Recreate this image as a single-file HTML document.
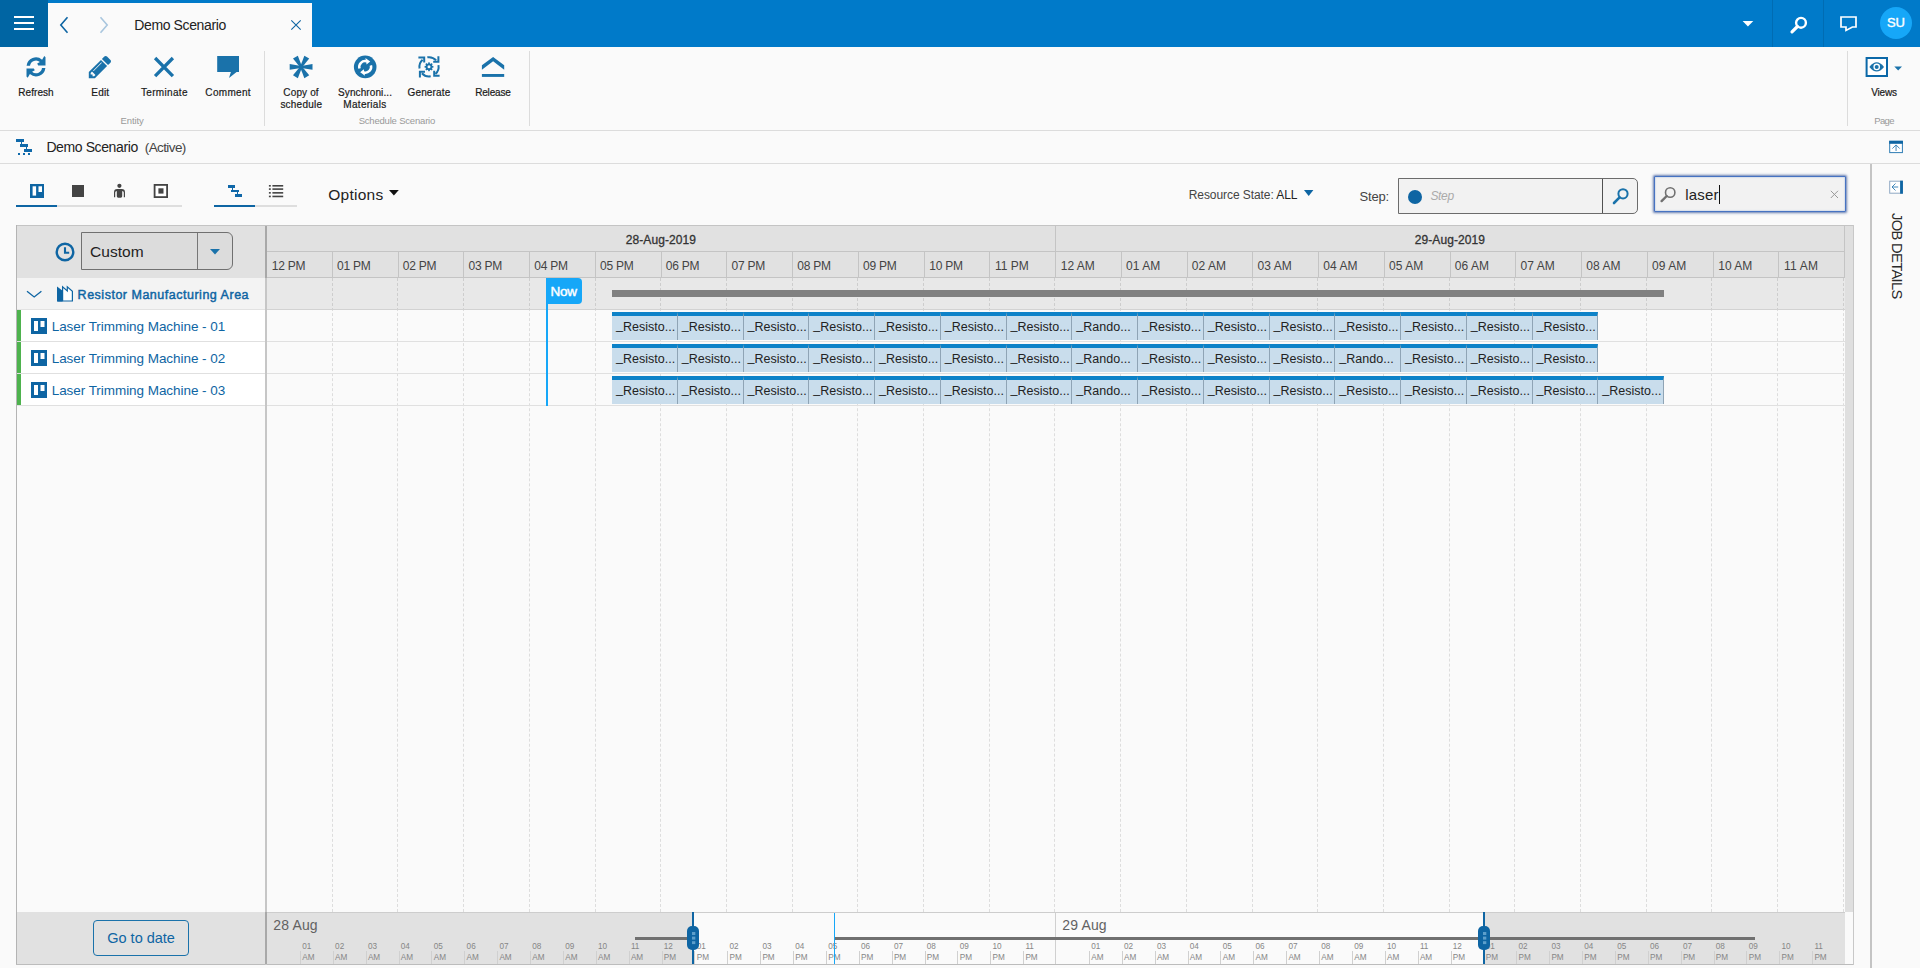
<!DOCTYPE html><html><head><meta charset="utf-8"><title>Demo Scenario</title><style>
*{box-sizing:border-box;margin:0;padding:0}
html,body{width:1920px;height:968px;overflow:hidden;background:#fafafa;font-family:"Liberation Sans",sans-serif;color:#222}
.a{position:absolute}
.t{position:absolute;white-space:nowrap;line-height:1}
svg{position:absolute;overflow:visible}
.task{position:absolute;height:28px;background:#c9ddec;border-top:4px solid #0d82c8;border-right:1px solid #8fa4b5}
.vd{position:absolute;width:0;border-left:1px dashed rgba(0,0,0,0.115);top:278px;height:634px}
.mt{position:absolute;width:1px;height:13px;top:951px;background:#d0d0d0}
</style></head><body>
<div class="a" style="left:0;top:0;width:1920px;height:47px;background:#007ac9"></div>
<div class="a" style="left:0;top:0;width:48px;height:47px;background:#0065a3"></div>
<div class="a" style="left:14px;top:16px;width:20px;height:2px;background:#fff"></div>
<div class="a" style="left:14px;top:22px;width:20px;height:2px;background:#fff"></div>
<div class="a" style="left:14px;top:28px;width:20px;height:2px;background:#fff"></div>
<div class="a" style="left:48px;top:3px;width:264px;height:44px;background:#fafafa"></div>
<svg style="left:58px;top:15px" width="12" height="20" viewBox="0 0 12 20"><path d="M9.5 2.2 L2.8 10 L9.5 17.8" fill="none" stroke="#0e65a3" stroke-width="1.6"/></svg>
<svg style="left:98px;top:15px" width="12" height="20" viewBox="0 0 12 20"><path d="M2.5 2.2 L9.2 10 L2.5 17.8" fill="none" stroke="#a9c6de" stroke-width="1.6"/></svg>
<div class="t" id="tabtitle" style="top:18.3px;font-size:14px;color:#222;letter-spacing:-0.384px;left:134.3px;">Demo Scenario</div>
<svg style="left:290px;top:19px" width="12" height="12" viewBox="0 0 12 12"><path d="M1.3 1.3 L10.7 10.7 M10.7 1.3 L1.3 10.7" fill="none" stroke="#0e65a3" stroke-width="1.1"/></svg>
<svg style="left:1742px;top:21px" width="12" height="7" viewBox="0 0 12 7"><path d="M0.6 0 H11.3 L5.95 5.6 Z" fill="#fff"/></svg>
<div class="a" style="left:1772px;top:0;width:1px;height:47px;background:#006cb3"></div>
<div class="a" style="left:1823px;top:0;width:1px;height:47px;background:#006cb3"></div>
<svg style="left:1790px;top:16px" width="18" height="18" viewBox="0 0 18 18"><circle cx="11" cy="6.8" r="4.9" fill="none" stroke="#fff" stroke-width="2.4"/><path d="M7.4 10.5 L2.0 15.9" stroke="#fff" stroke-width="3.2" stroke-linecap="round"/></svg>
<svg style="left:1840px;top:16px" width="17" height="16" viewBox="0 0 17 16"><path d="M1 1 H16 V11 H12.4 L6 14.4 V11 H1 Z" fill="none" stroke="#fff" stroke-width="1.7" stroke-linejoin="miter"/></svg>
<div class="a" style="left:1880px;top:7px;width:32px;height:32px;border-radius:16px;background:#16a7f8"></div>
<div class="t" id="su" style="top:16.2px;font-size:13px;color:#fff;letter-spacing:-0.042px;left:1795.98px;width:200px;text-align:center;-webkit-text-stroke:0.4px #fff;">SU</div>
<div class="a" style="left:0;top:130px;width:1920px;height:1px;background:#dcdcdc"></div>
<div class="t" id="r1" style="top:88px;font-size:10px;color:#1a1a1a;letter-spacing:0.059px;left:-63.97px;width:200px;text-align:center;-webkit-text-stroke:0.2px #1a1a1a;">Refresh</div>
<div class="t" id="r2" style="top:88px;font-size:10px;color:#1a1a1a;letter-spacing:0.190px;left:0.34px;width:200px;text-align:center;-webkit-text-stroke:0.2px #1a1a1a;">Edit</div>
<div class="t" id="r3" style="top:88px;font-size:10px;color:#1a1a1a;letter-spacing:0.329px;left:64.36px;width:200px;text-align:center;-webkit-text-stroke:0.2px #1a1a1a;">Terminate</div>
<div class="t" id="r4" style="top:88px;font-size:10px;color:#1a1a1a;letter-spacing:0.329px;left:128.16px;width:200px;text-align:center;-webkit-text-stroke:0.2px #1a1a1a;">Comment</div>
<div class="t" id="r5a" style="top:88px;font-size:10px;color:#1a1a1a;letter-spacing:0.143px;left:201.07px;width:200px;text-align:center;-webkit-text-stroke:0.2px #1a1a1a;">Copy of</div>
<div class="t" id="r5b" style="top:100px;font-size:10px;color:#1a1a1a;letter-spacing:0.223px;left:201.31px;width:200px;text-align:center;-webkit-text-stroke:0.2px #1a1a1a;">schedule</div>
<div class="t" id="r6a" style="top:88px;font-size:10px;color:#1a1a1a;letter-spacing:0.103px;left:265.05px;width:200px;text-align:center;-webkit-text-stroke:0.2px #1a1a1a;">Synchroni...</div>
<div class="t" id="r6b" style="top:100px;font-size:10px;color:#1a1a1a;letter-spacing:0.285px;left:264.94px;width:200px;text-align:center;-webkit-text-stroke:0.2px #1a1a1a;">Materials</div>
<div class="t" id="r7" style="top:88px;font-size:10px;color:#1a1a1a;letter-spacing:0.146px;left:328.97px;width:200px;text-align:center;-webkit-text-stroke:0.2px #1a1a1a;">Generate</div>
<div class="t" id="r8" style="top:88px;font-size:10px;color:#1a1a1a;letter-spacing:-0.185px;left:392.91px;width:200px;text-align:center;-webkit-text-stroke:0.2px #1a1a1a;">Release</div>
<div class="t" id="r9" style="top:88px;font-size:10px;color:#1a1a1a;letter-spacing:-0.156px;left:1784.02px;width:200px;text-align:center;-webkit-text-stroke:0.2px #1a1a1a;">Views</div>
<div class="a" style="left:264px;top:51px;width:1px;height:75px;background:#dcdcdc"></div>
<div class="a" style="left:529px;top:51px;width:1px;height:75px;background:#dcdcdc"></div>
<div class="a" style="left:1847px;top:51px;width:1px;height:75px;background:#dcdcdc"></div>
<div class="t" id="g1" style="top:115.5px;font-size:9.5px;color:#999;letter-spacing:-0.103px;left:32.05px;width:200px;text-align:center;">Entity</div>
<div class="t" id="g2" style="top:115.5px;font-size:9.5px;color:#999;letter-spacing:-0.191px;left:296.90px;width:200px;text-align:center;">Schedule Scenario</div>
<div class="t" id="g3" style="top:115.5px;font-size:9.5px;color:#999;letter-spacing:-0.654px;left:1784.07px;width:200px;text-align:center;">Page</div>
<svg style="left:20px;top:50px" width="32" height="34" viewBox="0 0 32 34"><g fill="#1a72aa"><path d="M6.6 15.7 A9.4 9.4 0 0 1 22.1 9.7 L24.3 6.1 L25.5 7.2 V15.4 H18.2 L17.2 13.6 L19.9 12.0 A6.0 6.0 0 0 0 10.0 15.7 Z"/><path transform="rotate(180 16 16.9)" d="M6.6 15.7 A9.4 9.4 0 0 1 22.1 9.7 L24.3 6.1 L25.5 7.2 V15.4 H18.2 L17.2 13.6 L19.9 12.0 A6.0 6.0 0 0 0 10.0 15.7 Z"/></g></svg>
<svg style="left:0;top:0" width="1" height="1"><g transform="translate(88.8 53.817) scale(0.01465)"><path fill="#1a72aa" d="M363 1536l91-91-235-235-91 91v107h128v128h107zm523-928q0-22-22-22-10 0-17 7l-542 542q-7 7-7 17 0 22 22 22 10 0 17-7l542-542q7-7 7-17zm-54-192l416 416-832 832h-416v-416zm683 96q0 53-37 90l-166 166-416-416 166-165q36-38 90-38 53 0 91 38l235 234q37 39 37 91z"/></g></svg>
<svg style="left:150px;top:53px" width="28" height="28" viewBox="0 0 28 28"><path d="M5.1 5.0 L22.9 23.1 M22.9 5.0 L5.1 23.1" stroke="#1a72aa" stroke-width="3.3" fill="none"/></svg>
<svg style="left:210px;top:50px" width="36" height="34" viewBox="0 0 36 34"><path d="M7.2 6 H29 V21.9 H26.6 L19 27.9 L20.9 21.9 H7.2 Z" fill="#1a72aa"/></svg>
<svg style="left:0;top:0" width="1" height="1"><g transform="translate(301.1 66.9)" fill="#1a72aa"><path transform="rotate(0)" d="M0 -1.0 L11.4 -2.8 V2.8 L0 1.0 Z"/><path transform="rotate(60)" d="M0 -1.0 L11.4 -2.8 V2.8 L0 1.0 Z"/><path transform="rotate(120)" d="M0 -1.0 L11.4 -2.8 V2.8 L0 1.0 Z"/><path transform="rotate(180)" d="M0 -1.0 L11.4 -2.8 V2.8 L0 1.0 Z"/><path transform="rotate(240)" d="M0 -1.0 L11.4 -2.8 V2.8 L0 1.0 Z"/><path transform="rotate(300)" d="M0 -1.0 L11.4 -2.8 V2.8 L0 1.0 Z"/><circle r="1.6"/></g></svg>
<svg style="left:0;top:0" width="1" height="1"><g transform="translate(365.2 66.9)"><circle r="11.3" fill="#1a72aa"/><g fill="none" stroke="#fff" stroke-width="2.5"><path d="M-5.7 1.6 A5.8 5.8 0 0 1 1.4 -5.6"/><path d="M5.7 -1.6 A5.8 5.8 0 0 1 -1.4 5.6"/></g><path d="M0.2 -8.9 L5.0 -5.3 L1.4 -2.3 Z" fill="#fff"/><path d="M-0.2 8.9 L-5.0 5.3 L-1.4 2.3 Z" fill="#fff"/></g></svg>
<svg style="left:0;top:0" width="1" height="1"><g transform="translate(429 66.8)"><g fill="none" stroke="#1a72aa" stroke-width="2.0"><path d="M-1.67 -9.45 A9.6 9.6 0 0 1 7.13 -6.42"/><path d="M9.45 -1.67 A9.6 9.6 0 0 1 6.42 7.13"/><path d="M1.67 9.45 A9.6 9.6 0 0 1 -7.13 6.42"/><path d="M-9.45 1.67 A9.6 9.6 0 0 1 -6.42 -7.13"/><path d="M9.4 -10.6 V-5.0 H4.2"/><path d="M10.6 9.0 H5.2 V4.0"/><path d="M-9.1 10.6 V4.9 H-4.0"/><path d="M-10.6 -9.2 H-4.8 V-4.2"/></g><circle r="2.45" fill="none" stroke="#1a72aa" stroke-width="1.9"/><rect transform="rotate(0)" x="-0.85" y="-4.4" width="1.7" height="1.6" fill="#1a72aa"/><rect transform="rotate(45)" x="-0.85" y="-4.4" width="1.7" height="1.6" fill="#1a72aa"/><rect transform="rotate(90)" x="-0.85" y="-4.4" width="1.7" height="1.6" fill="#1a72aa"/><rect transform="rotate(135)" x="-0.85" y="-4.4" width="1.7" height="1.6" fill="#1a72aa"/><rect transform="rotate(180)" x="-0.85" y="-4.4" width="1.7" height="1.6" fill="#1a72aa"/><rect transform="rotate(225)" x="-0.85" y="-4.4" width="1.7" height="1.6" fill="#1a72aa"/><rect transform="rotate(270)" x="-0.85" y="-4.4" width="1.7" height="1.6" fill="#1a72aa"/><rect transform="rotate(315)" x="-0.85" y="-4.4" width="1.7" height="1.6" fill="#1a72aa"/></g></svg>
<svg style="left:0;top:0" width="1" height="1"><g fill="#1a72aa"><path d="M493.1 56.9 L504.2 65.3 V69.7 L493.1 61.3 L481.9 69.7 V65.3 Z"/><rect x="481.9" y="74" width="22.3" height="2.9"/></g></svg>
<svg style="left:0;top:0" width="1" height="1"><rect x="1866.6" y="58" width="20.4" height="18" fill="#fff" stroke="#0b68a8" stroke-width="2"/><path d="M1869.4 66.9 Q1876.7 57.6 1884 66.9 Q1876.7 76.2 1869.4 66.9 Z" fill="#1a72aa"/><circle cx="1876.7" cy="66.9" r="3.3" fill="#fff"/><circle cx="1876.7" cy="66.9" r="2" fill="#1a72aa"/><path d="M1894.3 66.4 H1902 L1898.15 70.5 Z" fill="#1a72aa"/></svg>
<div class="a" style="left:0;top:163px;width:1920px;height:1px;background:#dcdcdc"></div>
<svg style="left:0;top:0" width="1" height="1" shape-rendering="crispEdges"><g fill="#0f69aa"><rect x="16" y="139" width="8" height="3"/><rect x="21" y="142" width="1" height="2"/><rect x="20" y="144" width="8" height="3"/><rect x="26" y="147" width="1" height="2"/><rect x="24" y="149" width="8" height="3"/><rect x="18" y="153" width="2" height="2"/><rect x="23" y="153" width="2" height="2"/><rect x="28" y="153" width="2" height="2"/></g></svg>
<div class="t" id="bc1" style="top:140.3px;font-size:14px;color:#222;letter-spacing:-0.392px;left:46.4px;">Demo Scenario</div>
<div class="t" id="bc2" style="top:140.5px;font-size:13.5px;color:#444;letter-spacing:-0.609px;left:144.8px;">(Active)</div>
<div class="a" style="left:1870px;top:164px;width:2px;height:804px;background:#c4c4c4"></div>
<div class="t" id="jd" style="top:213.3px;font-size:14.8px;color:#2a2a2a;letter-spacing:-0.711px;left:1904.1px;transform-origin:0 0;transform:rotate(90deg);">JOB DETAILS</div>
<svg style="left:0;top:0" width="1" height="1"><rect x="1889.7" y="141.3" width="12.7" height="11.3" fill="#fff" stroke="#2f7db4" stroke-width="1"/><rect x="1889.2" y="140.8" width="13.7" height="3" fill="#0e65a3"/><path d="M1896.05 151 V145 M1892.4 148.6 L1896.05 144.9 L1899.7 148.6" fill="none" stroke="#2f7db4" stroke-width="0.9"/></svg>
<svg style="left:0;top:0" width="1" height="1"><rect x="1889.7" y="181.2" width="12.7" height="12" fill="#fff" stroke="#8fa9c4" stroke-width="1"/><rect x="1900.1" y="180.7" width="2.8" height="13" fill="#0e65a3"/><path d="M1892 187 H1898.2 M1895.5 183.5 L1892 187 L1895.5 190.5" fill="none" stroke="#2f7db4" stroke-width="0.9"/></svg>
<div class="a" style="left:16px;top:205px;width:166px;height:2px;background:#dedede"></div>
<div class="a" style="left:16px;top:205px;width:41px;height:2px;background:#0e65a3"></div>
<div class="a" style="left:214px;top:205px;width:83px;height:2px;background:#dedede"></div>
<div class="a" style="left:214px;top:205px;width:41px;height:2px;background:#0e65a3"></div>
<svg style="left:0;top:0" width="1" height="1"><rect x="30" y="184" width="14" height="14" fill="#0e65a3"/><rect x="32.6" y="186.3" width="3.5" height="9.3" fill="#fff"/><rect x="38.5" y="186.3" width="3.5" height="5.7" fill="#fff"/></svg>
<div class="a" style="left:72px;top:185px;width:12px;height:12px;background:#444"></div>
<svg style="left:0;top:0" width="1" height="1"><g fill="#444"><circle cx="119.4" cy="185.8" r="2.1"/><path d="M114 197.2 V192.2 A3.2 3.2 0 0 1 117.2 189 H121.8 A3.2 3.2 0 0 1 125 192.2 V197.2 H123.8 V192.4 Q123.8 191.1 122.2 191 V196.3 A1.4 1.4 0 0 1 120.8 197.7 H118.2 A1.4 1.4 0 0 1 116.8 196.3 V191 Q115.2 191.1 115.2 192.4 V197.2 Z"/></g></svg>
<svg style="left:0;top:0" width="1" height="1"><rect x="154.6" y="184.9" width="12.5" height="12.2" fill="#fff" stroke="#444" stroke-width="1.8"/><rect x="158.4" y="188.3" width="5.1" height="5.3" fill="#444"/></svg>
<svg style="left:0;top:0" width="1" height="1" shape-rendering="crispEdges"><g fill="#0f67a8"><rect x="228" y="185" width="7" height="3"/><rect x="232" y="188" width="1" height="2"/><rect x="231" y="190" width="8" height="2"/><rect x="237" y="192" width="1" height="2"/><rect x="235" y="194" width="7" height="3"/></g></svg>
<svg style="left:0;top:0" width="1" height="1"><g fill="#444"><rect x="268.9" y="185.0" width="1.9" height="1.6"/><rect x="272.4" y="185.0" width="10.8" height="1.6"/><rect x="268.9" y="188.3" width="1.9" height="1.6"/><rect x="272.4" y="188.3" width="10.8" height="1.6"/><rect x="268.9" y="192.05" width="1.9" height="1.6"/><rect x="272.4" y="192.05" width="10.8" height="1.6"/><rect x="268.9" y="195.65" width="1.9" height="1.6"/><rect x="272.4" y="195.65" width="10.8" height="1.6"/></g></svg>
<div class="t" id="opt" style="top:186.5px;font-size:15.5px;color:#222;letter-spacing:0.243px;left:328.3px;">Options</div>
<svg style="left:389px;top:190px" width="10" height="6" viewBox="0 0 10 6"><path d="M0 0 H9.8 L4.9 5.4 Z" fill="#111"/></svg>
<div class="t" id="rs" style="top:188.8px;font-size:12px;color:#444;letter-spacing:-0.072px;left:1188.75px;">Resource State: <span style="color:#222">ALL</span></div>
<svg style="left:1303.7px;top:190px" width="10" height="7" viewBox="0 0 10 7"><path d="M0 0 H9.4 L4.7 6 Z" fill="#0e65a3"/></svg>
<div class="t" id="stp" style="top:190px;font-size:13px;color:#444;letter-spacing:-0.191px;left:1359.6px;">Step:</div>
<div class="a" style="left:1398px;top:178px;width:240px;height:36px;border:1px solid #6c6c6c;border-radius:0 5px 5px 0;background:#f2f2f2"></div>
<div class="a" style="left:1602px;top:179px;width:1px;height:34px;background:#505050"></div>
<div class="a" style="left:1408px;top:189.5px;width:14px;height:14px;border-radius:7px;background:#0e65a3"></div>
<div class="t" id="stph" style="top:190px;font-size:12px;color:#aaa;letter-spacing:-0.311px;font-style:italic;left:1430.4px;">Step</div>
<svg style="left:1612px;top:187px" width="18" height="18" viewBox="0 0 18 18"><circle cx="11" cy="6.8" r="4.6" fill="none" stroke="#1a72aa" stroke-width="2"/><path d="M7.6 10.4 L2 16" stroke="#1a72aa" stroke-width="2.6" stroke-linecap="round"/></svg>
<div class="a" style="left:1654px;top:176px;width:192px;height:36px;border:1px solid #4673c2;border-radius:1px;background:#f2f2f2;box-shadow:0 0 2.5px 0.6px rgba(50,80,150,0.75), inset 0 0 1.5px rgba(70,115,194,0.7)"></div>
<svg style="left:1660px;top:186px" width="17" height="17" viewBox="0 0 17 17"><circle cx="10.2" cy="6.5" r="4.7" fill="none" stroke="#707070" stroke-width="1.6"/><path d="M6.7 10 L1.6 15.1" stroke="#707070" stroke-width="2.4" stroke-linecap="round"/></svg>
<div class="t" id="laser" style="top:186.8px;font-size:15px;color:#222;letter-spacing:0.152px;left:1685.3px;">laser</div>
<div class="a" style="left:1719px;top:184.5px;width:1px;height:19px;background:#111"></div>
<svg style="left:1830px;top:190px" width="9" height="9" viewBox="0 0 9 9"><path d="M0.8 0.8 L8 8 M8 0.8 L0.8 8" fill="none" stroke="#999" stroke-width="1"/></svg>
<div class="a" style="left:16px;top:225px;width:1838px;height:1px;background:#c4c4c4"></div>
<div class="a" style="left:16px;top:226px;width:1829px;height:52px;background:#e1e1e1"></div>
<div class="a" style="left:1845px;top:226px;width:9px;height:686px;background:#dfdfdf"></div>
<div class="a" style="left:16px;top:225px;width:1px;height:740px;background:#b4b4b4"></div>
<div class="a" style="left:17px;top:278px;width:248px;height:32px;background:#f3f3f3"></div>
<div class="a" style="left:267px;top:278px;width:1578px;height:32px;background:#e8e8e8"></div>
<div class="a" style="left:17px;top:310px;width:248px;height:96px;background:#fff"></div>
<div class="a" style="left:17px;top:406px;width:248px;height:506px;background:#fafafa"></div>
<div class="a" style="left:267px;top:310px;width:1578px;height:602px;background:#fafafa"></div>
<div class="a" style="left:267px;top:251px;width:1578px;height:1px;background:#c4c4c4"></div>
<div class="a" style="left:267px;top:277px;width:1578px;height:1px;background:#c4c4c4"></div>
<div class="a" style="left:332px;top:252px;width:1px;height:26px;background:#c4c4c4"></div>
<div class="vd" style="left:332px"></div>
<div class="a" style="left:398px;top:252px;width:1px;height:26px;background:#c4c4c4"></div>
<div class="vd" style="left:397px"></div>
<div class="a" style="left:463px;top:252px;width:1px;height:26px;background:#c4c4c4"></div>
<div class="vd" style="left:463px"></div>
<div class="a" style="left:529px;top:252px;width:1px;height:26px;background:#c4c4c4"></div>
<div class="vd" style="left:529px"></div>
<div class="a" style="left:595px;top:252px;width:1px;height:26px;background:#c4c4c4"></div>
<div class="vd" style="left:595px"></div>
<div class="a" style="left:661px;top:252px;width:1px;height:26px;background:#c4c4c4"></div>
<div class="vd" style="left:660px"></div>
<div class="a" style="left:726px;top:252px;width:1px;height:26px;background:#c4c4c4"></div>
<div class="vd" style="left:726px"></div>
<div class="a" style="left:792px;top:252px;width:1px;height:26px;background:#c4c4c4"></div>
<div class="vd" style="left:792px"></div>
<div class="a" style="left:858px;top:252px;width:1px;height:26px;background:#c4c4c4"></div>
<div class="vd" style="left:857px"></div>
<div class="a" style="left:924px;top:252px;width:1px;height:26px;background:#c4c4c4"></div>
<div class="vd" style="left:923px"></div>
<div class="a" style="left:989px;top:252px;width:1px;height:26px;background:#c4c4c4"></div>
<div class="vd" style="left:989px"></div>
<div class="a" style="left:1055px;top:226px;width:1px;height:52px;background:#c4c4c4"></div>
<div class="vd" style="left:1054px"></div>
<div class="a" style="left:1121px;top:252px;width:1px;height:26px;background:#c4c4c4"></div>
<div class="vd" style="left:1120px"></div>
<div class="a" style="left:1187px;top:252px;width:1px;height:26px;background:#c4c4c4"></div>
<div class="vd" style="left:1186px"></div>
<div class="a" style="left:1252px;top:252px;width:1px;height:26px;background:#c4c4c4"></div>
<div class="vd" style="left:1252px"></div>
<div class="a" style="left:1318px;top:252px;width:1px;height:26px;background:#c4c4c4"></div>
<div class="vd" style="left:1317px"></div>
<div class="a" style="left:1384px;top:252px;width:1px;height:26px;background:#c4c4c4"></div>
<div class="vd" style="left:1383px"></div>
<div class="a" style="left:1450px;top:252px;width:1px;height:26px;background:#c4c4c4"></div>
<div class="vd" style="left:1449px"></div>
<div class="a" style="left:1515px;top:252px;width:1px;height:26px;background:#c4c4c4"></div>
<div class="vd" style="left:1514px"></div>
<div class="a" style="left:1581px;top:252px;width:1px;height:26px;background:#c4c4c4"></div>
<div class="vd" style="left:1580px"></div>
<div class="a" style="left:1647px;top:252px;width:1px;height:26px;background:#c4c4c4"></div>
<div class="vd" style="left:1646px"></div>
<div class="a" style="left:1713px;top:252px;width:1px;height:26px;background:#c4c4c4"></div>
<div class="vd" style="left:1711px"></div>
<div class="a" style="left:1778px;top:252px;width:1px;height:26px;background:#c4c4c4"></div>
<div class="vd" style="left:1777px"></div>
<div class="a" style="left:1844px;top:226px;width:1px;height:52px;background:#c4c4c4"></div>
<div class="vd" style="left:1843px"></div>
<div class="t" id="h0" style="top:259.5px;font-size:12px;color:#444;letter-spacing:-0.219px;left:271.7px;">12 PM</div>
<div class="t" id="h1" style="top:259.5px;font-size:12px;color:#444;letter-spacing:-0.219px;left:337.05px;">01 PM</div>
<div class="t" id="h2" style="top:259.5px;font-size:12px;color:#444;letter-spacing:-0.219px;left:402.8px;">02 PM</div>
<div class="t" id="h3" style="top:259.5px;font-size:12px;color:#444;letter-spacing:-0.219px;left:468.55px;">03 PM</div>
<div class="t" id="h4" style="top:259.5px;font-size:12px;color:#444;letter-spacing:-0.219px;left:534.3px;">04 PM</div>
<div class="t" id="h5" style="top:259.5px;font-size:12px;color:#444;letter-spacing:-0.219px;left:600.05px;">05 PM</div>
<div class="t" id="h6" style="top:259.5px;font-size:12px;color:#444;letter-spacing:-0.219px;left:665.8px;">06 PM</div>
<div class="t" id="h7" style="top:259.5px;font-size:12px;color:#444;letter-spacing:-0.219px;left:731.55px;">07 PM</div>
<div class="t" id="h8" style="top:259.5px;font-size:12px;color:#444;letter-spacing:-0.219px;left:797.3px;">08 PM</div>
<div class="t" id="h9" style="top:259.5px;font-size:12px;color:#444;letter-spacing:-0.219px;left:863.05px;">09 PM</div>
<div class="t" id="h10" style="top:259.5px;font-size:12px;color:#444;letter-spacing:-0.219px;left:929.2px;">10 PM</div>
<div class="t" id="h11" style="top:259.5px;font-size:12px;color:#444;letter-spacing:-0.022px;left:994.95px;">11 PM</div>
<div class="t" id="h12" style="top:259.5px;font-size:12px;color:#444;letter-spacing:0.038px;left:1060.7px;">12 AM</div>
<div class="t" id="h13" style="top:259.5px;font-size:12px;color:#444;letter-spacing:0.038px;left:1126.05px;">01 AM</div>
<div class="t" id="h14" style="top:259.5px;font-size:12px;color:#444;letter-spacing:0.038px;left:1191.8px;">02 AM</div>
<div class="t" id="h15" style="top:259.5px;font-size:12px;color:#444;letter-spacing:0.038px;left:1257.55px;">03 AM</div>
<div class="t" id="h16" style="top:259.5px;font-size:12px;color:#444;letter-spacing:0.038px;left:1323.3px;">04 AM</div>
<div class="t" id="h17" style="top:259.5px;font-size:12px;color:#444;letter-spacing:0.038px;left:1389.05px;">05 AM</div>
<div class="t" id="h18" style="top:259.5px;font-size:12px;color:#444;letter-spacing:0.038px;left:1454.8px;">06 AM</div>
<div class="t" id="h19" style="top:259.5px;font-size:12px;color:#444;letter-spacing:0.038px;left:1520.55px;">07 AM</div>
<div class="t" id="h20" style="top:259.5px;font-size:12px;color:#444;letter-spacing:0.038px;left:1586.3px;">08 AM</div>
<div class="t" id="h21" style="top:259.5px;font-size:12px;color:#444;letter-spacing:0.038px;left:1652.05px;">09 AM</div>
<div class="t" id="h22" style="top:259.5px;font-size:12px;color:#444;letter-spacing:0.038px;left:1718.2px;">10 AM</div>
<div class="t" id="h23" style="top:259.5px;font-size:12px;color:#444;letter-spacing:0.235px;left:1783.95px;">11 AM</div>
<div class="t" id="d1" style="top:233.5px;font-size:12px;color:#333;letter-spacing:0.087px;left:625.7px;-webkit-text-stroke:0.3px #333;">28-Aug-2019</div>
<div class="t" id="d2" style="top:233.5px;font-size:12px;color:#333;letter-spacing:0.087px;left:1414.7px;-webkit-text-stroke:0.3px #333;">29-Aug-2019</div>
<div class="a" style="left:17px;top:309px;width:248px;height:1px;background:#e2e2e2"></div>
<div class="a" style="left:267px;top:309px;width:1578px;height:1px;background:#d2d2d2"></div>
<div class="a" style="left:17px;top:341px;width:1828px;height:1px;background:#e0e0e0"></div>
<div class="a" style="left:17px;top:373px;width:1828px;height:1px;background:#e0e0e0"></div>
<div class="a" style="left:17px;top:405px;width:1828px;height:1px;background:#e0e0e0"></div>
<div class="a" style="left:17px;top:310px;width:4px;height:31px;background:#4eb24e"></div>
<div class="a" style="left:17px;top:342px;width:4px;height:31px;background:#4eb24e"></div>
<div class="a" style="left:17px;top:374px;width:4px;height:31px;background:#4eb24e"></div>
<svg style="left:55px;top:242px" width="20" height="20" viewBox="0 0 20 20"><circle cx="10" cy="10" r="8.3" fill="none" stroke="#0e65a3" stroke-width="2.4"/><path d="M10 5.2 V10.8 H14.2" fill="none" stroke="#0e65a3" stroke-width="2.1"/></svg>
<div class="a" style="left:81px;top:232px;width:152px;height:38px;border:1px solid #707070;border-radius:0 6px 6px 0;background:#dcdcdc"></div>
<div class="a" style="left:197px;top:233px;width:1px;height:36px;background:#777"></div>
<div class="t" id="cust" style="top:243.5px;font-size:15.5px;color:#222;letter-spacing:0.062px;left:90px;">Custom</div>
<svg style="left:210px;top:249px" width="10" height="6" viewBox="0 0 10 6"><path d="M0 0 H10 L5 5.4 Z" fill="#1a72aa"/></svg>
<svg style="left:26px;top:290px" width="16" height="9" viewBox="0 0 16 9"><path d="M1 1.2 L8.2 7 L15.4 1.2" fill="none" stroke="#0e65a3" stroke-width="1.3"/></svg>
<svg style="left:0;top:0" width="1" height="1"><path d="M57 286.4 L62.6 290.8 V301.6 H57 Z" fill="#0e65a3"/><path d="M62.6 301 V286.9 L67.3 291 V286.9 L72.4 291.2 V301 H57.6" fill="#fff" stroke="#0e65a3" stroke-width="1.2"/></svg>
<div class="t" id="rma" style="top:288.5px;font-size:12.5px;color:#0e65a3;letter-spacing:0.509px;left:77.6px;-webkit-text-stroke:0.45px #0e65a3;">Resistor Manufacturing Area</div>
<svg style="left:31px;top:318px" width="16" height="16" viewBox="0 0 16 16"><rect x="0" y="0" width="16" height="16" fill="#0e65a3"/><rect x="3" y="3" width="4" height="10" fill="#fff"/><rect x="9.5" y="3" width="4" height="6" fill="#fff"/></svg>
<div class="t" id="ltm0" style="top:320px;font-size:13.5px;color:#0e65a3;letter-spacing:-0.050px;left:51.7px;">Laser Trimming Machine - 01</div>
<svg style="left:31px;top:350px" width="16" height="16" viewBox="0 0 16 16"><rect x="0" y="0" width="16" height="16" fill="#0e65a3"/><rect x="3" y="3" width="4" height="10" fill="#fff"/><rect x="9.5" y="3" width="4" height="6" fill="#fff"/></svg>
<div class="t" id="ltm1" style="top:352px;font-size:13.5px;color:#0e65a3;letter-spacing:-0.050px;left:51.7px;">Laser Trimming Machine - 02</div>
<svg style="left:31px;top:382px" width="16" height="16" viewBox="0 0 16 16"><rect x="0" y="0" width="16" height="16" fill="#0e65a3"/><rect x="3" y="3" width="4" height="10" fill="#fff"/><rect x="9.5" y="3" width="4" height="6" fill="#fff"/></svg>
<div class="t" id="ltm2" style="top:384px;font-size:13.5px;color:#0e65a3;letter-spacing:-0.050px;left:51.7px;">Laser Trimming Machine - 03</div>
<div class="a" style="left:612px;top:290px;width:1052px;height:7px;background:#808080"></div>
<div class="task" style="left:612px;top:312px;width:66px"></div>
<div class="t" id="k0_0" style="top:320.9px;font-size:12.5px;color:#222;letter-spacing:0.004px;left:616.09px;"><span style="position:relative;top:-1.5px">_</span>Resisto...</div>
<div class="task" style="left:678px;top:312px;width:66px"></div>
<div class="t" id="k0_1" style="top:320.9px;font-size:12.5px;color:#222;letter-spacing:0.004px;left:681.84px;"><span style="position:relative;top:-1.5px">_</span>Resisto...</div>
<div class="task" style="left:744px;top:312px;width:65px"></div>
<div class="t" id="k0_2" style="top:320.9px;font-size:12.5px;color:#222;letter-spacing:0.004px;left:747.59px;"><span style="position:relative;top:-1.5px">_</span>Resisto...</div>
<div class="task" style="left:809px;top:312px;width:66px"></div>
<div class="t" id="k0_3" style="top:320.9px;font-size:12.5px;color:#222;letter-spacing:0.004px;left:813.34px;"><span style="position:relative;top:-1.5px">_</span>Resisto...</div>
<div class="task" style="left:875px;top:312px;width:66px"></div>
<div class="t" id="k0_4" style="top:320.9px;font-size:12.5px;color:#222;letter-spacing:0.004px;left:879.09px;"><span style="position:relative;top:-1.5px">_</span>Resisto...</div>
<div class="task" style="left:941px;top:312px;width:66px"></div>
<div class="t" id="k0_5" style="top:320.9px;font-size:12.5px;color:#222;letter-spacing:0.004px;left:944.84px;"><span style="position:relative;top:-1.5px">_</span>Resisto...</div>
<div class="task" style="left:1007px;top:312px;width:65px"></div>
<div class="t" id="k0_6" style="top:320.9px;font-size:12.5px;color:#222;letter-spacing:0.004px;left:1010.59px;"><span style="position:relative;top:-1.5px">_</span>Resisto...</div>
<div class="task" style="left:1072px;top:312px;width:66px"></div>
<div class="t" id="k0_7" style="top:320.9px;font-size:12.5px;color:#222;letter-spacing:0.010px;left:1076.34px;"><span style="position:relative;top:-1.5px">_</span>Rando...</div>
<div class="task" style="left:1138px;top:312px;width:66px"></div>
<div class="t" id="k0_8" style="top:320.9px;font-size:12.5px;color:#222;letter-spacing:0.004px;left:1142.09px;"><span style="position:relative;top:-1.5px">_</span>Resisto...</div>
<div class="task" style="left:1204px;top:312px;width:66px"></div>
<div class="t" id="k0_9" style="top:320.9px;font-size:12.5px;color:#222;letter-spacing:0.004px;left:1207.84px;"><span style="position:relative;top:-1.5px">_</span>Resisto...</div>
<div class="task" style="left:1270px;top:312px;width:65px"></div>
<div class="t" id="k0_10" style="top:320.9px;font-size:12.5px;color:#222;letter-spacing:0.004px;left:1273.59px;"><span style="position:relative;top:-1.5px">_</span>Resisto...</div>
<div class="task" style="left:1335px;top:312px;width:66px"></div>
<div class="t" id="k0_11" style="top:320.9px;font-size:12.5px;color:#222;letter-spacing:0.004px;left:1339.34px;"><span style="position:relative;top:-1.5px">_</span>Resisto...</div>
<div class="task" style="left:1401px;top:312px;width:66px"></div>
<div class="t" id="k0_12" style="top:320.9px;font-size:12.5px;color:#222;letter-spacing:0.004px;left:1405.09px;"><span style="position:relative;top:-1.5px">_</span>Resisto...</div>
<div class="task" style="left:1467px;top:312px;width:66px"></div>
<div class="t" id="k0_13" style="top:320.9px;font-size:12.5px;color:#222;letter-spacing:0.004px;left:1470.84px;"><span style="position:relative;top:-1.5px">_</span>Resisto...</div>
<div class="task" style="left:1533px;top:312px;width:65px"></div>
<div class="t" id="k0_14" style="top:320.9px;font-size:12.5px;color:#222;letter-spacing:0.004px;left:1536.59px;"><span style="position:relative;top:-1.5px">_</span>Resisto...</div>
<div class="task" style="left:612px;top:344px;width:66px"></div>
<div class="t" id="k1_0" style="top:352.9px;font-size:12.5px;color:#222;letter-spacing:0.004px;left:616.09px;"><span style="position:relative;top:-1.5px">_</span>Resisto...</div>
<div class="task" style="left:678px;top:344px;width:66px"></div>
<div class="t" id="k1_1" style="top:352.9px;font-size:12.5px;color:#222;letter-spacing:0.004px;left:681.84px;"><span style="position:relative;top:-1.5px">_</span>Resisto...</div>
<div class="task" style="left:744px;top:344px;width:65px"></div>
<div class="t" id="k1_2" style="top:352.9px;font-size:12.5px;color:#222;letter-spacing:0.004px;left:747.59px;"><span style="position:relative;top:-1.5px">_</span>Resisto...</div>
<div class="task" style="left:809px;top:344px;width:66px"></div>
<div class="t" id="k1_3" style="top:352.9px;font-size:12.5px;color:#222;letter-spacing:0.004px;left:813.34px;"><span style="position:relative;top:-1.5px">_</span>Resisto...</div>
<div class="task" style="left:875px;top:344px;width:66px"></div>
<div class="t" id="k1_4" style="top:352.9px;font-size:12.5px;color:#222;letter-spacing:0.004px;left:879.09px;"><span style="position:relative;top:-1.5px">_</span>Resisto...</div>
<div class="task" style="left:941px;top:344px;width:66px"></div>
<div class="t" id="k1_5" style="top:352.9px;font-size:12.5px;color:#222;letter-spacing:0.004px;left:944.84px;"><span style="position:relative;top:-1.5px">_</span>Resisto...</div>
<div class="task" style="left:1007px;top:344px;width:65px"></div>
<div class="t" id="k1_6" style="top:352.9px;font-size:12.5px;color:#222;letter-spacing:0.004px;left:1010.59px;"><span style="position:relative;top:-1.5px">_</span>Resisto...</div>
<div class="task" style="left:1072px;top:344px;width:66px"></div>
<div class="t" id="k1_7" style="top:352.9px;font-size:12.5px;color:#222;letter-spacing:0.010px;left:1076.34px;"><span style="position:relative;top:-1.5px">_</span>Rando...</div>
<div class="task" style="left:1138px;top:344px;width:66px"></div>
<div class="t" id="k1_8" style="top:352.9px;font-size:12.5px;color:#222;letter-spacing:0.004px;left:1142.09px;"><span style="position:relative;top:-1.5px">_</span>Resisto...</div>
<div class="task" style="left:1204px;top:344px;width:66px"></div>
<div class="t" id="k1_9" style="top:352.9px;font-size:12.5px;color:#222;letter-spacing:0.004px;left:1207.84px;"><span style="position:relative;top:-1.5px">_</span>Resisto...</div>
<div class="task" style="left:1270px;top:344px;width:65px"></div>
<div class="t" id="k1_10" style="top:352.9px;font-size:12.5px;color:#222;letter-spacing:0.004px;left:1273.59px;"><span style="position:relative;top:-1.5px">_</span>Resisto...</div>
<div class="task" style="left:1335px;top:344px;width:66px"></div>
<div class="t" id="k1_11" style="top:352.9px;font-size:12.5px;color:#222;letter-spacing:0.010px;left:1339.34px;"><span style="position:relative;top:-1.5px">_</span>Rando...</div>
<div class="task" style="left:1401px;top:344px;width:66px"></div>
<div class="t" id="k1_12" style="top:352.9px;font-size:12.5px;color:#222;letter-spacing:0.004px;left:1405.09px;"><span style="position:relative;top:-1.5px">_</span>Resisto...</div>
<div class="task" style="left:1467px;top:344px;width:66px"></div>
<div class="t" id="k1_13" style="top:352.9px;font-size:12.5px;color:#222;letter-spacing:0.004px;left:1470.84px;"><span style="position:relative;top:-1.5px">_</span>Resisto...</div>
<div class="task" style="left:1533px;top:344px;width:65px"></div>
<div class="t" id="k1_14" style="top:352.9px;font-size:12.5px;color:#222;letter-spacing:0.004px;left:1536.59px;"><span style="position:relative;top:-1.5px">_</span>Resisto...</div>
<div class="task" style="left:612px;top:376px;width:66px"></div>
<div class="t" id="k2_0" style="top:384.9px;font-size:12.5px;color:#222;letter-spacing:0.004px;left:616.09px;"><span style="position:relative;top:-1.5px">_</span>Resisto...</div>
<div class="task" style="left:678px;top:376px;width:66px"></div>
<div class="t" id="k2_1" style="top:384.9px;font-size:12.5px;color:#222;letter-spacing:0.004px;left:681.84px;"><span style="position:relative;top:-1.5px">_</span>Resisto...</div>
<div class="task" style="left:744px;top:376px;width:65px"></div>
<div class="t" id="k2_2" style="top:384.9px;font-size:12.5px;color:#222;letter-spacing:0.004px;left:747.59px;"><span style="position:relative;top:-1.5px">_</span>Resisto...</div>
<div class="task" style="left:809px;top:376px;width:66px"></div>
<div class="t" id="k2_3" style="top:384.9px;font-size:12.5px;color:#222;letter-spacing:0.004px;left:813.34px;"><span style="position:relative;top:-1.5px">_</span>Resisto...</div>
<div class="task" style="left:875px;top:376px;width:66px"></div>
<div class="t" id="k2_4" style="top:384.9px;font-size:12.5px;color:#222;letter-spacing:0.004px;left:879.09px;"><span style="position:relative;top:-1.5px">_</span>Resisto...</div>
<div class="task" style="left:941px;top:376px;width:66px"></div>
<div class="t" id="k2_5" style="top:384.9px;font-size:12.5px;color:#222;letter-spacing:0.004px;left:944.84px;"><span style="position:relative;top:-1.5px">_</span>Resisto...</div>
<div class="task" style="left:1007px;top:376px;width:65px"></div>
<div class="t" id="k2_6" style="top:384.9px;font-size:12.5px;color:#222;letter-spacing:0.004px;left:1010.59px;"><span style="position:relative;top:-1.5px">_</span>Resisto...</div>
<div class="task" style="left:1072px;top:376px;width:66px"></div>
<div class="t" id="k2_7" style="top:384.9px;font-size:12.5px;color:#222;letter-spacing:0.010px;left:1076.34px;"><span style="position:relative;top:-1.5px">_</span>Rando...</div>
<div class="task" style="left:1138px;top:376px;width:66px"></div>
<div class="t" id="k2_8" style="top:384.9px;font-size:12.5px;color:#222;letter-spacing:0.004px;left:1142.09px;"><span style="position:relative;top:-1.5px">_</span>Resisto...</div>
<div class="task" style="left:1204px;top:376px;width:66px"></div>
<div class="t" id="k2_9" style="top:384.9px;font-size:12.5px;color:#222;letter-spacing:0.004px;left:1207.84px;"><span style="position:relative;top:-1.5px">_</span>Resisto...</div>
<div class="task" style="left:1270px;top:376px;width:65px"></div>
<div class="t" id="k2_10" style="top:384.9px;font-size:12.5px;color:#222;letter-spacing:0.004px;left:1273.59px;"><span style="position:relative;top:-1.5px">_</span>Resisto...</div>
<div class="task" style="left:1335px;top:376px;width:66px"></div>
<div class="t" id="k2_11" style="top:384.9px;font-size:12.5px;color:#222;letter-spacing:0.004px;left:1339.34px;"><span style="position:relative;top:-1.5px">_</span>Resisto...</div>
<div class="task" style="left:1401px;top:376px;width:66px"></div>
<div class="t" id="k2_12" style="top:384.9px;font-size:12.5px;color:#222;letter-spacing:0.004px;left:1405.09px;"><span style="position:relative;top:-1.5px">_</span>Resisto...</div>
<div class="task" style="left:1467px;top:376px;width:66px"></div>
<div class="t" id="k2_13" style="top:384.9px;font-size:12.5px;color:#222;letter-spacing:0.004px;left:1470.84px;"><span style="position:relative;top:-1.5px">_</span>Resisto...</div>
<div class="task" style="left:1533px;top:376px;width:65px"></div>
<div class="t" id="k2_14" style="top:384.9px;font-size:12.5px;color:#222;letter-spacing:0.004px;left:1536.59px;"><span style="position:relative;top:-1.5px">_</span>Resisto...</div>
<div class="task" style="left:1598px;top:376px;width:66px"></div>
<div class="t" id="k2_15" style="top:384.9px;font-size:12.5px;color:#222;letter-spacing:0.004px;left:1602.34px;"><span style="position:relative;top:-1.5px">_</span>Resisto...</div>
<div class="a" style="left:546px;top:278px;width:2px;height:128px;background:#16a7f8"></div>
<div class="a" style="left:546px;top:278px;width:36px;height:26px;background:#16a7f8;border-radius:0 4px 4px 0"></div>
<div class="t" id="now" style="top:285px;font-size:13.5px;color:#fff;letter-spacing:-0.206px;left:463.70px;width:200px;text-align:center;-webkit-text-stroke:0.45px #fff;">Now</div>
<div class="a" style="left:17px;top:912px;width:1828px;height:52px;background:#e1e1e1"></div>
<div class="a" style="left:267px;top:912px;width:1578px;height:1px;background:#cdcdcd"></div>
<div class="a" style="left:694px;top:913px;width:790px;height:51px;background:#fafafa"></div>
<div class="a" style="left:16px;top:964px;width:1838px;height:1px;background:#bcbcbc"></div>
<div class="a" style="left:1853px;top:225px;width:1px;height:740px;background:#c8c8c8"></div>
<div class="a" style="left:265px;top:278px;width:2px;height:687px;background:#c6c6c6"></div>
<div class="a" style="left:265px;top:226px;width:2px;height:52px;background:#a8a8a8"></div>
<div class="a" style="left:265px;top:912px;width:2px;height:52px;background:#a8a8a8"></div>
<div class="a" style="left:93px;top:920px;width:96px;height:36px;border:1px solid #1a72aa;border-radius:4px"></div>
<div class="t" id="gtd" style="top:930.5px;font-size:14.5px;color:#0e65a3;letter-spacing:-0.002px;left:41.10px;width:200px;text-align:center;">Go to date</div>
<div class="t" id="m1" style="top:918px;font-size:14px;color:#626262;letter-spacing:0.144px;left:273.3px;">28 Aug</div>
<div class="t" id="m2" style="top:918px;font-size:14px;color:#626262;letter-spacing:0.144px;left:1062.3px;">29 Aug</div>
<div class="a" style="left:1055px;top:913px;width:1px;height:51px;background:#d0d0d0"></div>
<div class="mt" style="left:300px"></div>
<div class="t" style="left:302.2px;top:940.6px;font-size:8.2px;line-height:11px;color:#868686">01<br>AM</div>
<div class="mt" style="left:333px"></div>
<div class="t" style="left:335.1px;top:940.6px;font-size:8.2px;line-height:11px;color:#868686">02<br>AM</div>
<div class="mt" style="left:366px"></div>
<div class="t" style="left:367.9px;top:940.6px;font-size:8.2px;line-height:11px;color:#868686">03<br>AM</div>
<div class="mt" style="left:399px"></div>
<div class="t" style="left:400.8px;top:940.6px;font-size:8.2px;line-height:11px;color:#868686">04<br>AM</div>
<div class="mt" style="left:431px"></div>
<div class="t" style="left:433.7px;top:940.6px;font-size:8.2px;line-height:11px;color:#868686">05<br>AM</div>
<div class="mt" style="left:464px"></div>
<div class="t" style="left:466.6px;top:940.6px;font-size:8.2px;line-height:11px;color:#868686">06<br>AM</div>
<div class="mt" style="left:497px"></div>
<div class="t" style="left:499.4px;top:940.6px;font-size:8.2px;line-height:11px;color:#868686">07<br>AM</div>
<div class="mt" style="left:530px"></div>
<div class="t" style="left:532.3px;top:940.6px;font-size:8.2px;line-height:11px;color:#868686">08<br>AM</div>
<div class="mt" style="left:563px"></div>
<div class="t" style="left:565.2px;top:940.6px;font-size:8.2px;line-height:11px;color:#868686">09<br>AM</div>
<div class="mt" style="left:596px"></div>
<div class="t" style="left:598.0px;top:940.6px;font-size:8.2px;line-height:11px;color:#868686">10<br>AM</div>
<div class="mt" style="left:629px"></div>
<div class="t" style="left:630.9px;top:940.6px;font-size:8.2px;line-height:11px;color:#868686">11<br>AM</div>
<div class="mt" style="left:662px"></div>
<div class="t" style="left:663.8px;top:940.6px;font-size:8.2px;line-height:11px;color:#868686">12<br>PM</div>
<div class="mt" style="left:694px"></div>
<div class="t" style="left:696.7px;top:940.6px;font-size:8.2px;line-height:11px;color:#868686">01<br>PM</div>
<div class="mt" style="left:727px"></div>
<div class="t" style="left:729.5px;top:940.6px;font-size:8.2px;line-height:11px;color:#868686">02<br>PM</div>
<div class="mt" style="left:760px"></div>
<div class="t" style="left:762.4px;top:940.6px;font-size:8.2px;line-height:11px;color:#868686">03<br>PM</div>
<div class="mt" style="left:793px"></div>
<div class="t" style="left:795.3px;top:940.6px;font-size:8.2px;line-height:11px;color:#868686">04<br>PM</div>
<div class="mt" style="left:826px"></div>
<div class="t" style="left:828.2px;top:940.6px;font-size:8.2px;line-height:11px;color:#868686">05<br>PM</div>
<div class="mt" style="left:859px"></div>
<div class="t" style="left:861.0px;top:940.6px;font-size:8.2px;line-height:11px;color:#868686">06<br>PM</div>
<div class="mt" style="left:892px"></div>
<div class="t" style="left:893.9px;top:940.6px;font-size:8.2px;line-height:11px;color:#868686">07<br>PM</div>
<div class="mt" style="left:925px"></div>
<div class="t" style="left:926.8px;top:940.6px;font-size:8.2px;line-height:11px;color:#868686">08<br>PM</div>
<div class="mt" style="left:957px"></div>
<div class="t" style="left:959.7px;top:940.6px;font-size:8.2px;line-height:11px;color:#868686">09<br>PM</div>
<div class="mt" style="left:990px"></div>
<div class="t" style="left:992.5px;top:940.6px;font-size:8.2px;line-height:11px;color:#868686">10<br>PM</div>
<div class="mt" style="left:1023px"></div>
<div class="t" style="left:1025.4px;top:940.6px;font-size:8.2px;line-height:11px;color:#868686">11<br>PM</div>
<div class="mt" style="left:1089px"></div>
<div class="t" style="left:1091.2px;top:940.6px;font-size:8.2px;line-height:11px;color:#868686">01<br>AM</div>
<div class="mt" style="left:1122px"></div>
<div class="t" style="left:1124.0px;top:940.6px;font-size:8.2px;line-height:11px;color:#868686">02<br>AM</div>
<div class="mt" style="left:1155px"></div>
<div class="t" style="left:1156.9px;top:940.6px;font-size:8.2px;line-height:11px;color:#868686">03<br>AM</div>
<div class="mt" style="left:1188px"></div>
<div class="t" style="left:1189.8px;top:940.6px;font-size:8.2px;line-height:11px;color:#868686">04<br>AM</div>
<div class="mt" style="left:1220px"></div>
<div class="t" style="left:1222.7px;top:940.6px;font-size:8.2px;line-height:11px;color:#868686">05<br>AM</div>
<div class="mt" style="left:1253px"></div>
<div class="t" style="left:1255.5px;top:940.6px;font-size:8.2px;line-height:11px;color:#868686">06<br>AM</div>
<div class="mt" style="left:1286px"></div>
<div class="t" style="left:1288.4px;top:940.6px;font-size:8.2px;line-height:11px;color:#868686">07<br>AM</div>
<div class="mt" style="left:1319px"></div>
<div class="t" style="left:1321.3px;top:940.6px;font-size:8.2px;line-height:11px;color:#868686">08<br>AM</div>
<div class="mt" style="left:1352px"></div>
<div class="t" style="left:1354.2px;top:940.6px;font-size:8.2px;line-height:11px;color:#868686">09<br>AM</div>
<div class="mt" style="left:1385px"></div>
<div class="t" style="left:1387.0px;top:940.6px;font-size:8.2px;line-height:11px;color:#868686">10<br>AM</div>
<div class="mt" style="left:1418px"></div>
<div class="t" style="left:1419.9px;top:940.6px;font-size:8.2px;line-height:11px;color:#868686">11<br>AM</div>
<div class="mt" style="left:1451px"></div>
<div class="t" style="left:1452.8px;top:940.6px;font-size:8.2px;line-height:11px;color:#868686">12<br>PM</div>
<div class="mt" style="left:1483px"></div>
<div class="t" style="left:1485.7px;top:940.6px;font-size:8.2px;line-height:11px;color:#868686">01<br>PM</div>
<div class="mt" style="left:1516px"></div>
<div class="t" style="left:1518.5px;top:940.6px;font-size:8.2px;line-height:11px;color:#868686">02<br>PM</div>
<div class="mt" style="left:1549px"></div>
<div class="t" style="left:1551.4px;top:940.6px;font-size:8.2px;line-height:11px;color:#868686">03<br>PM</div>
<div class="mt" style="left:1582px"></div>
<div class="t" style="left:1584.3px;top:940.6px;font-size:8.2px;line-height:11px;color:#868686">04<br>PM</div>
<div class="mt" style="left:1615px"></div>
<div class="t" style="left:1617.2px;top:940.6px;font-size:8.2px;line-height:11px;color:#868686">05<br>PM</div>
<div class="mt" style="left:1648px"></div>
<div class="t" style="left:1650.0px;top:940.6px;font-size:8.2px;line-height:11px;color:#868686">06<br>PM</div>
<div class="mt" style="left:1681px"></div>
<div class="t" style="left:1682.9px;top:940.6px;font-size:8.2px;line-height:11px;color:#868686">07<br>PM</div>
<div class="mt" style="left:1714px"></div>
<div class="t" style="left:1715.8px;top:940.6px;font-size:8.2px;line-height:11px;color:#868686">08<br>PM</div>
<div class="mt" style="left:1746px"></div>
<div class="t" style="left:1748.7px;top:940.6px;font-size:8.2px;line-height:11px;color:#868686">09<br>PM</div>
<div class="mt" style="left:1779px"></div>
<div class="t" style="left:1781.5px;top:940.6px;font-size:8.2px;line-height:11px;color:#868686">10<br>PM</div>
<div class="mt" style="left:1812px"></div>
<div class="t" style="left:1814.4px;top:940.6px;font-size:8.2px;line-height:11px;color:#868686">11<br>PM</div>
<div class="a" style="left:635px;top:937px;width:58px;height:3px;background:#707070"></div>
<div class="a" style="left:834px;top:937px;width:921px;height:3px;background:#707070"></div>
<div class="a" style="left:834px;top:913px;width:1px;height:51px;background:#16a7f8"></div>
<div class="a" style="left:692px;top:912px;width:2px;height:52px;background:#0e65a3"></div>
<div class="a" style="left:687px;top:926px;width:12px;height:24px;border-radius:5px;background:#0e65a3"></div>
<svg style="left:0;top:0" width="1" height="1"><g fill="#5d9fcb"><rect x="692" y="932" width="3.3" height="3"/><rect x="692" y="936.6" width="3.3" height="3"/><rect x="692" y="941.2" width="3.3" height="2.9"/></g></svg>
<div class="a" style="left:1483px;top:912px;width:2px;height:52px;background:#0e65a3"></div>
<div class="a" style="left:1478px;top:926px;width:12px;height:24px;border-radius:5px;background:#0e65a3"></div>
<svg style="left:0;top:0" width="1" height="1"><g fill="#5d9fcb"><rect x="1483" y="932" width="3.3" height="3"/><rect x="1483" y="936.6" width="3.3" height="3"/><rect x="1483" y="941.2" width="3.3" height="2.9"/></g></svg>
</body></html>
